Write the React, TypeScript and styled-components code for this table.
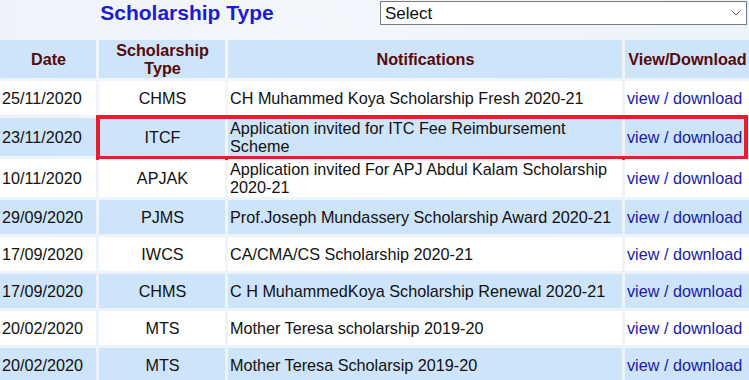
import React from "react";
import styled, { createGlobalStyle } from "styled-components";

const GlobalStyle = createGlobalStyle`
  html, body {
    margin: 0;
    padding: 0;
  }
  body {
    background: #edf3fa;
    font-family: "Liberation Sans", Arial, sans-serif;
  }
`;

type Notice = {
  date: string;
  type: string;
  title: string;
};

const notices: Notice[] = [
  { date: "25/11/2020", type: "CHMS", title: "CH Muhammed Koya Scholarship Fresh 2020-21" },
  { date: "23/11/2020", type: "ITCF", title: "Application invited for ITC Fee Reimbursement Scheme" },
  { date: "10/11/2020", type: "APJAK", title: "Application invited For APJ Abdul Kalam Scholarship 2020-21" },
  { date: "29/09/2020", type: "PJMS", title: "Prof.Joseph Mundassery Scholarship Award 2020-21" },
  { date: "17/09/2020", type: "IWCS", title: "CA/CMA/CS Scholarship 2020-21" },
  { date: "17/09/2020", type: "CHMS", title: "C H MuhammedKoya Scholarship Renewal 2020-21" },
  { date: "20/02/2020", type: "MTS", title: "Mother Teresa scholarship 2019-20" },
  { date: "20/02/2020", type: "MTS", title: "Mother Teresa Scholarsip 2019-20" },
];

const Page = styled.div`
  width: 749px;
  height: 380px;
  overflow: hidden;
  background: radial-gradient(ellipse at 40% 10%, #f4f7fc 0%, #edf3fa 60%);
`;

const TopBar = styled.div`
  display: grid;
  grid-template-columns: 374px 1fr;
  height: 37px;
  margin-bottom: 3px;
`;

const Title = styled.h2`
  margin: 0;
  text-align: center;
  font-size: 21px;
  line-height: 26px;
  font-weight: bold;
  color: #1c1cd0;
`;

const SelectWrap = styled.div`
  position: relative;
  margin: 1px 2px 0 6px;
  height: 24px;
`;

const Select = styled.select`
  appearance: none;
  width: 100%;
  height: 24px;
  box-sizing: border-box;
  border: 1px solid #7a7a7a;
  border-radius: 0;
  background: #fff;
  padding: 0 0 0 4px;
  font-family: "Liberation Sans", Arial, sans-serif;
  font-size: 17px;
  color: #111;
`;

const Chevron = styled.svg`
  position: absolute;
  right: 6px;
  top: 9px;
  pointer-events: none;
`;

const Table = styled.div`
  display: flex;
  flex-direction: column;
  gap: 3px;
`;

const Row = styled.div`
  position: relative;
  display: grid;
  grid-template-columns: 96px 126px 394px 1fr;
  gap: 3px;
`;

const Cell = styled.div<{ $shade?: boolean; $align?: string }>`
  display: flex;
  align-items: center;
  justify-content: ${(p) => p.$align || "flex-start"};
  text-align: ${(p) => (p.$align === "center" ? "center" : "left")};
  min-height: 34px;
  box-sizing: border-box;
  padding: 1px 1px 1px 2px;
  background: ${(p) => (p.$shade ? "#cde4fa" : "#ffffff")};
  font-size: 16.2px;
  line-height: 18px;
  color: #111;
`;

const HeadCell = styled(Cell)`
  justify-content: center;
  text-align: center;
  background: #cde4fa;
  font-weight: bold;
  color: #560a0a;
  min-height: 38px;
`;

const Link = styled.a`
  color: #1a1aa8;
  text-decoration: none;
  white-space: nowrap;
`;

const Highlight = styled.div`
  position: absolute;
  left: 96px;
  right: 1px;
  top: -3px;
  bottom: -4px;
  border: 4px solid #e0202a;
  pointer-events: none;
`;

export default function App() {
  return (
    <Page>
      <GlobalStyle />
      <TopBar>
        <Title>Scholarship Type</Title>
        <SelectWrap>
          <Select defaultValue="">
            <option value="">Select</option>
          </Select>
          <Chevron width="10" height="6" viewBox="0 0 10 6">
            <path d="M0.5 0.5 L5 5 L9.5 0.5" fill="none" stroke="#555" strokeWidth="1" />
          </Chevron>
        </SelectWrap>
      </TopBar>
      <Table>
        <Row>
          <HeadCell>Date</HeadCell>
          <HeadCell>
            Scholarship
            <br />
            Type
          </HeadCell>
          <HeadCell>Notifications</HeadCell>
          <HeadCell>View/Download</HeadCell>
        </Row>
        {notices.map((n, i) => {
          const shade = i % 2 === 1;
          return (
            <Row key={i}>
              <Cell $shade={shade}>{n.date}</Cell>
              <Cell $shade={shade} $align="center">
                {n.type}
              </Cell>
              <Cell $shade={shade}>{n.title}</Cell>
              <Cell $shade={shade}>
                <Link href="#">view / download</Link>
              </Cell>
              {i === 1 && <Highlight />}
            </Row>
          );
        })}
      </Table>
    </Page>
  );
}
